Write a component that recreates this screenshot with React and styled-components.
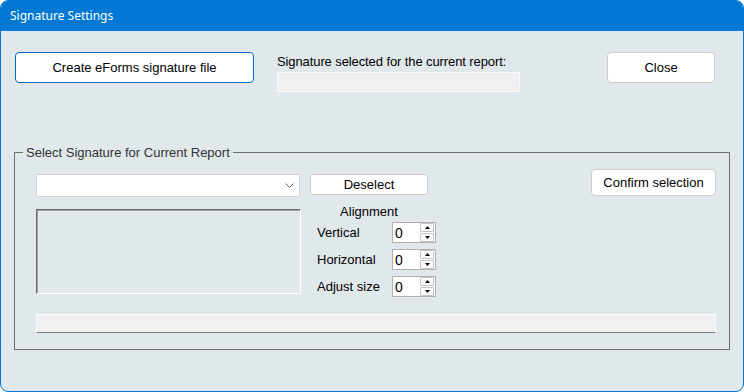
import React from 'react'
import styled, { createGlobalStyle } from 'styled-components'

const Global = createGlobalStyle`
  html, body { margin: 0; padding: 0; background: #fff; }
  body { font-family: "Liberation Sans", Arial, sans-serif; font-size: 13px; color: #000; }
  * { box-sizing: border-box; }
`

function Chevron() {
    return (
        <svg width="9" height="5" viewBox="0 0 9 5">
            <path d="M0.5 0.5 L4.5 4.5 L8.5 0.5" fill="none" stroke="#606060" strokeWidth="1" />
        </svg>
    )
}

function Arrow({ down }) {
    return (
        <svg width="5" height="3" viewBox="0 0 5 3">
            <path d={down ? "M0 0 L5 0 L2.5 3 Z" : "M0 3 L5 3 L2.5 0 Z"} fill="#000" />
        </svg>
    )
}

function Spinner({ value }) {
    return (
        <SpinBox>
            <SpinValue>{value}</SpinValue>
            <SpinButtons>
                <SpinButton><Arrow /></SpinButton>
                <SpinButton><Arrow down /></SpinButton>
            </SpinButtons>
        </SpinBox>
    )
}

export default function App() {
    const alignRows = ["Vertical", "Horizontal", "Adjust size"]
    return (
        <>
            <Global />
            <Window>
                <TitleBar>Signature Settings</TitleBar>
                <Body>
                    <TopRow>
                        <Button $primary $width={239} $height={31}>Create eForms signature file</Button>
                        <SelectedColumn>
                            <SelectedLabel>Signature selected for the current report:</SelectedLabel>
                            <ReadOnlyField />
                        </SelectedColumn>
                        <CloseButton $width={108} $height={31}>Close</CloseButton>
                    </TopRow>
                    <GroupBox>
                        <Legend>Select Signature for Current Report</Legend>
                        <GroupRow>
                            <LeftColumn>
                                <Combo>
                                    <Chevron />
                                </Combo>
                                <PictureBox />
                            </LeftColumn>
                            <MidColumn>
                                <Button $width={118} $height={21} $radius={3}>Deselect</Button>
                                <AlignTitle>Alignment</AlignTitle>
                                <AlignGrid>
                                    {alignRows.map((label) => (
                                        <AlignRow key={label}>
                                            <AlignLabel>{label}</AlignLabel>
                                            <Spinner value="0" />
                                        </AlignRow>
                                    ))}
                                </AlignGrid>
                            </MidColumn>
                            <ConfirmButton $width={125} $height={27}>Confirm selection</ConfirmButton>
                        </GroupRow>
                        <ProgressBar />
                    </GroupBox>
                </Body>
            </Window>
        </>
    )
}

const Window = styled.div`
    width: 744px;
    height: 392px;
    border: 1px solid #0078d4;
    border-radius: 8px;
    overflow: hidden;
    background: #e1e8ec;
    display: flex;
    flex-direction: column;
`
const TitleBar = styled.div`
    height: 30px;
    background: #0078d4;
    color: #fff;
    font-family: "Noto Sans", "Open Sans", sans-serif;
    font-size: 12px;
    line-height: 30px;
    padding-left: 9px;
`
const Body = styled.div`
    flex: 1;
    padding: 21px 14px 0 13px;
`
const TopRow = styled.div`
    display: flex;
    align-items: flex-start;
    margin: 0 14px 0 1px;
`
const Button = styled.button`
    width: ${(p) => p.$width}px;
    height: ${(p) => p.$height}px;
    background: #fff;
    border: 1px solid ${(p) => (p.$primary ? '#0067c0' : '#cdcdcd')};
    border-radius: ${(p) => p.$radius || 4}px;
    font-family: "Liberation Sans", Arial, sans-serif;
    font-size: 13px;
    color: #000;
    padding: 0;
    flex-shrink: 0;
`
const CloseButton = styled(Button)`
    margin-left: auto;
`
const SelectedColumn = styled.div`
    margin-left: 23px;
    width: 243px;
    display: flex;
    flex-direction: column;
    padding-top: 2px;
`
const SelectedLabel = styled.div`
    line-height: 15px;
    margin-bottom: 3px;
    letter-spacing: -0.1px;
`
const ReadOnlyField = styled.div`
    height: 20px;
    background: #f0f0f0;
    border: 1px solid #fafafa;
`
const GroupBox = styled.fieldset`
    width: 716px;
    margin: 53px 0 0 0;
    padding: 9px 12px 16px 21px;
    border: 1px solid #6e6e6e;
    min-width: 0;
`
const Legend = styled.legend`
    margin-left: -13px;
    padding: 0 3px;
    line-height: 15px;
    color: #333;
`
const GroupRow = styled.div`
    display: flex;
    align-items: flex-start;
`
const LeftColumn = styled.div`
    width: 265px;
    margin-top: 5px;
    display: flex;
    flex-direction: column;
    gap: 12px;
`
const Combo = styled.div`
    height: 23px;
    width: 264px;
    background: #fff;
    border: 1px solid #d4d4d4;
    border-radius: 2px;
    display: flex;
    align-items: center;
    justify-content: flex-end;
    padding-right: 5px;
`
const PictureBox = styled.div`
    height: 85px;
    width: 265px;
    border: 1px solid;
    border-color: #6d6d6d #ffffff #ffffff #6d6d6d;
    box-shadow: inset 1px 1px 0 #a0a0a0;
`
const MidColumn = styled.div`
    margin-left: 9px;
    margin-top: 5px;
    width: 126px;
    display: flex;
    flex-direction: column;
`
const AlignTitle = styled.div`
    width: 118px;
    text-align: center;
    line-height: 15px;
    margin-top: 9px;
`
const AlignGrid = styled.div`
    display: flex;
    flex-direction: column;
    gap: 6px;
    margin-top: 3px;
    padding-left: 7px;
`
const AlignRow = styled.div`
    display: flex;
    align-items: center;
    height: 21px;
`
const AlignLabel = styled.span`
    width: 75px;
    flex-shrink: 0;
    white-space: nowrap;
`
const SpinBox = styled.div`
    width: 44px;
    height: 21px;
    background: #fff;
    border: 1px solid #b0b0b0;
    display: flex;
    align-items: center;
    flex-shrink: 0;
`
const SpinValue = styled.span`
    flex: 1;
    padding-left: 2px;
    font-size: 14px;
`
const SpinButtons = styled.div`
    display: flex;
    flex-direction: column;
    gap: 1px;
    margin-right: 1px;
`
const SpinButton = styled.div`
    width: 14px;
    height: 9px;
    background: #fbfbfb;
    border: 1px solid #c4c4c4;
    border-radius: 1px;
    display: flex;
    align-items: center;
    justify-content: center;
`
const ConfirmButton = styled(Button)`
    margin-left: auto;
    margin-right: 1px;
`
const ProgressBar = styled.div`
    margin-top: 17px;
    margin-right: 1px;
    height: 19px;
    background: #f0f0f0;
    border: 1px solid;
    border-color: #fbfbfb #fbfbfb #7a7a7a #fbfbfb;
`
